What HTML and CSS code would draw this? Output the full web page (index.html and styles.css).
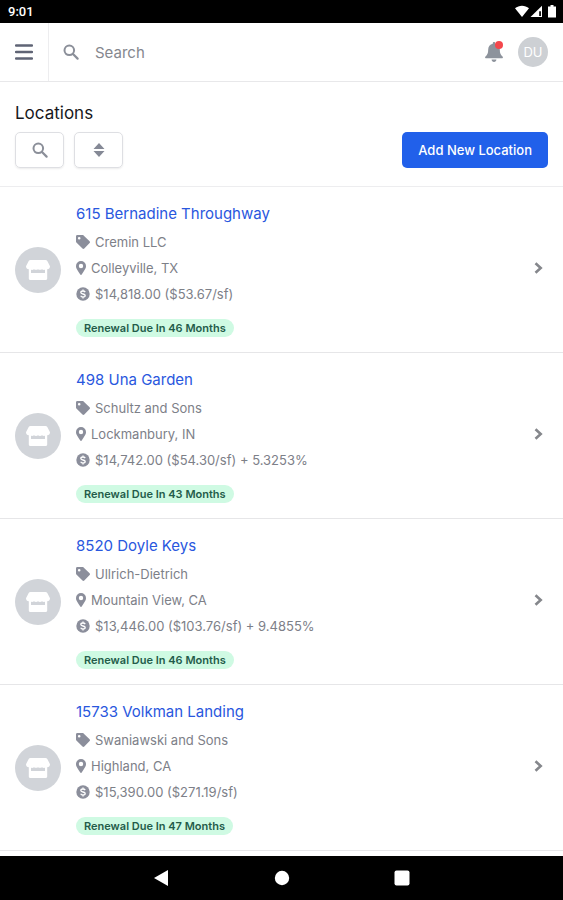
FILE: index.html
```html
<!DOCTYPE html>
<html lang="en">
<head>
  <meta charset="UTF-8">
  <meta name="viewport" content="width=device-width, initial-scale=1.0">
  <title>Locations</title>
  <link rel="stylesheet" href="styles.css">
</head>
<body>

  <!-- shared icons -->
  <svg class="sprite" aria-hidden="true">
    <symbol id="i-search" viewBox="0 0 16 16"><circle cx="6.3" cy="6.3" r="4.8" fill="none" stroke="currentColor" stroke-width="2"/><path d="M10 10l4.6 4.6" stroke="currentColor" stroke-width="2.2" stroke-linecap="round"/></symbol>
    <symbol id="i-store" viewBox="0 0 24 20"><path fill="currentColor" d="M4.500 0h15c.8 0 1.400.4 1.800 1L24 6.200C24 8 22.800 9.200 21.200 9.200V18.500c0 .8-.7 1.500-1.500 1.500H4.300c-.8 0-1.500-.7-1.500-1.500V9.200C1.200 9.200 0 8 0 6.200L2.700 1C3.100.4 3.700 0 4.500 0zM5 9.800v3.200h14V9.800c-1 .3-2.200.1-3-.6-1.100.9-2.900.9-4 0-1.100.9-2.900.9-4 0-.8.700-2 .9-3 .6z"/></symbol>
    <symbol id="i-tag" viewBox="0 0 14 14"><path fill="currentColor" fill-rule="evenodd" d="M1.300 0H6.600c.4 0 .7.1 1 .4l6 5.900c.5.500.5 1.300 0 1.800l-5.300 5.500c-.5.500-1.300.5-1.800 0L.4 7.600C.1 7.300 0 7 0 6.600V1.300C0 .6.600 0 1.300 0zM3.200 1.900a1.300 1.300 0 1 0 0 2.600 1.300 1.300 0 0 0 0-2.600z"/></symbol>
    <symbol id="i-pin" viewBox="0 0 10 14"><path fill="currentColor" fill-rule="evenodd" d="M5 0a5 5 0 0 1 5 5c0 2.200-.8 3-4.300 8.600a.9.900 0 0 1-1.400 0C.8 8 0 7.200 0 5a5 5 0 0 1 5-5zM5 2.800a2.200 2.200 0 1 0 0 4.400 2.200 2.200 0 0 0 0-4.400z"/></symbol>
    <symbol id="i-money" viewBox="0 0 14 14"><circle cx="7" cy="7" r="6.700" fill="currentColor"/><path d="M9.200 5.100C8.800 4.400 8 4 7 4c-1.300 0-2.200.6-2.200 1.500C4.800 7.500 9.200 6.500 9.200 8.500 9.200 9.400 8.300 10 7 10c-1.100 0-1.900-.4-2.300-1.200M7 2.600V4M7 10v1.400" fill="none" stroke="#fff" stroke-width="1.300"/></symbol>
    <symbol id="i-chevron" viewBox="0 0 9 12"><path d="M1.500 1.300L6.700 6l-5.200 4.700" fill="none" stroke="currentColor" stroke-width="2.600"/></symbol>
  </svg>

  <div class="status-bar">
    <span>9:01</span>
    <svg class="status-icons" viewBox="0 0 42 13" fill="#fff" aria-hidden="true">
      <path d="M0 3.300C4-.2 10-.2 14 3.300L7 12z"/>
      <path d="M27 .8V12H15.500z"/>
      <path d="M24.200 6.300h1.700V11h-1.700z" fill="#000"/>
      <path d="M35.500 0h3v1.500H41V12.500h-8V1.500h2.500z"/>
    </svg>
  </div>

  <header class="topbar">
    <button class="menu-btn" type="button" aria-label="Menu">
      <svg viewBox="0 0 18 16" aria-hidden="true"><path d="M1 1.500h16M1 8h16M1 14.500h16" stroke="currentColor" stroke-width="2.400" stroke-linecap="round"/></svg>
    </button>
    <label class="search">
      <svg class="icon-search" aria-hidden="true"><use href="#i-search"/></svg>
      <input type="search" placeholder="Search" aria-label="Search">
    </label>
    <button class="bell-btn" type="button" aria-label="Notifications">
      <svg viewBox="0 0 18 20" aria-hidden="true"><path fill="currentColor" d="M9 0c.7 0 1.200.5 1.200 1.200v.6c2.900.6 4.600 2.900 4.600 5.700 0 3.800.9 5.300 2.700 6.900.9.800.4 1.900-.6 1.900H1.100c-1 0-1.500-1.100-.6-1.900 1.800-1.600 2.700-3.100 2.700-6.900 0-2.800 1.700-5.100 4.600-5.700v-.6C7.800.5 8.300 0 9 0zM6.600 17.500h4.800C11.400 19 10.400 20 9 20s-2.400-1-2.400-2.500z"/></svg>
      <span class="dot"></span>
    </button>
    <a class="avatar" href="#">DU</a>
  </header>

  <section class="toolbar">
    <h1>Locations</h1>
    <div class="actions">
      <button class="tool-btn" type="button" aria-label="Search locations">
        <svg class="icon-search" aria-hidden="true"><use href="#i-search"/></svg>
      </button>
      <button class="tool-btn" type="button" aria-label="Sort">
        <svg class="icon-sort" viewBox="0 0 12 14" fill="currentColor" aria-hidden="true"><path d="M6 0l5.500 6H.5zM6 14L.5 8h11z"/></svg>
      </button>
      <button class="primary-btn" type="button">Add New Location</button>
    </div>
  </section>

  <main class="list">
    <article class="item">
      <span class="thumb"><svg aria-hidden="true"><use href="#i-store"/></svg></span>
      <div class="info">
        <h2><a href="#">615 Bernadine Throughway</a></h2>
        <p><svg class="tag" aria-hidden="true"><use href="#i-tag"/></svg>Cremin LLC</p>
        <p><svg class="pin" aria-hidden="true"><use href="#i-pin"/></svg>Colleyville, TX</p>
        <p><svg class="money" aria-hidden="true"><use href="#i-money"/></svg>$14,818.00 ($53.67/sf)</p>
        <span class="badge">Renewal Due In 46 Months</span>
      </div>
      <svg class="chevron" aria-hidden="true"><use href="#i-chevron"/></svg>
    </article>

    <article class="item">
      <span class="thumb"><svg aria-hidden="true"><use href="#i-store"/></svg></span>
      <div class="info">
        <h2><a href="#">498 Una Garden</a></h2>
        <p><svg class="tag" aria-hidden="true"><use href="#i-tag"/></svg>Schultz and Sons</p>
        <p><svg class="pin" aria-hidden="true"><use href="#i-pin"/></svg>Lockmanbury, IN</p>
        <p><svg class="money" aria-hidden="true"><use href="#i-money"/></svg>$14,742.00 ($54.30/sf) + 5.3253%</p>
        <span class="badge">Renewal Due In 43 Months</span>
      </div>
      <svg class="chevron" aria-hidden="true"><use href="#i-chevron"/></svg>
    </article>

    <article class="item">
      <span class="thumb"><svg aria-hidden="true"><use href="#i-store"/></svg></span>
      <div class="info">
        <h2><a href="#">8520 Doyle Keys</a></h2>
        <p><svg class="tag" aria-hidden="true"><use href="#i-tag"/></svg>Ullrich-Dietrich</p>
        <p><svg class="pin" aria-hidden="true"><use href="#i-pin"/></svg>Mountain View, CA</p>
        <p><svg class="money" aria-hidden="true"><use href="#i-money"/></svg>$13,446.00 ($103.76/sf) + 9.4855%</p>
        <span class="badge">Renewal Due In 46 Months</span>
      </div>
      <svg class="chevron" aria-hidden="true"><use href="#i-chevron"/></svg>
    </article>

    <article class="item">
      <span class="thumb"><svg aria-hidden="true"><use href="#i-store"/></svg></span>
      <div class="info">
        <h2><a href="#">15733 Volkman Landing</a></h2>
        <p><svg class="tag" aria-hidden="true"><use href="#i-tag"/></svg>Swaniawski and Sons</p>
        <p><svg class="pin" aria-hidden="true"><use href="#i-pin"/></svg>Highland, CA</p>
        <p><svg class="money" aria-hidden="true"><use href="#i-money"/></svg>$15,390.00 ($271.19/sf)</p>
        <span class="badge">Renewal Due In 47 Months</span>
      </div>
      <svg class="chevron" aria-hidden="true"><use href="#i-chevron"/></svg>
    </article>
  </main>

  <nav class="nav-bar">
    <button type="button" aria-label="Back"><svg viewBox="0 0 16 16" aria-hidden="true"><path d="M14 0v16L0 8z"/></svg></button>
    <button type="button" aria-label="Home"><svg viewBox="0 0 16 16" aria-hidden="true"><circle cx="8" cy="8" r="7.200"/></svg></button>
    <button type="button" aria-label="Recent apps"><svg viewBox="0 0 16 16" aria-hidden="true"><rect x=".5" y=".5" width="15" height="15" rx="2"/></svg></button>
  </nav>

</body>
</html>
```
FILE: styles.css
```css
* {
  box-sizing: border-box;
}

body {
  margin: 0;
  min-height: 100vh;
  display: flex;
  flex-direction: column;
  font-family: Inter, "Liberation Sans", sans-serif;
  font-size: 13px;
  background-color: #fff;
  color: #7d8088;
}

button {
  margin: 0;
  padding: 0;
  border: none;
  background: none;
  font: inherit;
  color: inherit;
  cursor: pointer;
}

a {
  color: inherit;
  text-decoration: none;
}

svg {
  display: block;
  flex-shrink: 0;
}

.sprite {
  position: absolute;
  width: 0;
  height: 0;
}

.status-bar {
  display: flex;
  align-items: center;
  justify-content: space-between;
  height: 23px;
  padding: 0 6px 0 8px;
  background-color: #000;
  color: #fff;
  font-family: Roboto, sans-serif;
  font-size: 13px;
  font-weight: 500;
}

.status-icons {
  width: 42px;
  height: 13px;
}

.topbar {
  display: flex;
  align-items: center;
  height: 59px;
  padding-right: 15px;
  border-bottom: 1px solid #e8e8ea;
}

.menu-btn {
  display: flex;
  align-items: center;
  justify-content: center;
  align-self: stretch;
  width: 49px;
  border-right: 1px solid #ededef;
  color: #5f6475;
}

.menu-btn svg {
  width: 18px;
  height: 16px;
}

.search {
  display: flex;
  align-items: center;
  flex: 1;
  gap: 16px;
  min-width: 0;
  padding-left: 14px;
}

.icon-search {
  width: 16px;
  height: 16px;
  color: #8b8f99;
}

.search input {
  flex: 1;
  min-width: 0;
  padding: 0;
  border: none;
  outline: none;
  background: none;
  font: inherit;
  font-size: 15px;
}

.search input::placeholder {
  color: #85878e;
}

.bell-btn {
  position: relative;
  margin-right: 15px;
  color: #8d939c;
}

.bell-btn svg {
  width: 18px;
  height: 20px;
}

.dot {
  position: absolute;
  top: -1px;
  right: 0;
  width: 8px;
  height: 8px;
  border-radius: 50%;
  background-color: #f4474c;
}

.avatar {
  display: flex;
  align-items: center;
  justify-content: center;
  width: 30px;
  height: 30px;
  border-radius: 50%;
  background-color: #cdd0d4;
  color: #fff;
}

.toolbar {
  padding: 20px 15px 18px;
  border-bottom: 1px solid #ededef;
}

.toolbar h1 {
  margin: 0 0 8px;
  font-size: 17px;
  line-height: 22px;
  font-weight: 400;
  color: #17181c;
}

.actions {
  display: flex;
  gap: 10px;
}

.tool-btn {
  display: flex;
  align-items: center;
  justify-content: center;
  width: 49px;
  height: 36px;
  border: 1px solid #dedfe3;
  border-radius: 5px;
  box-shadow: 0 1px 2px rgba(0, 0, 0, 0.08);
}

.icon-sort {
  width: 12px;
  height: 14px;
  color: #858996;
}

.primary-btn {
  margin-left: auto;
  height: 36px;
  padding: 0 16px;
  border-radius: 5px;
  background-color: #2160ea;
  color: #fff;
  font-weight: 500;
}

.list {
  flex: 1;
}

.item {
  display: flex;
  align-items: center;
  gap: 15px;
  padding: 16px 20px 15px 15px;
  border-bottom: 1px solid #e6e6e8;
}

.thumb {
  display: flex;
  align-items: center;
  justify-content: center;
  flex-shrink: 0;
  width: 46px;
  height: 46px;
  border-radius: 50%;
  background-color: #d1d4d9;
  color: #fff;
}

.thumb svg {
  width: 24px;
  height: 20px;
}

.info {
  flex: 1;
  min-width: 0;
}

.info h2 {
  margin: 0 0 4px;
  font-size: 15px;
  line-height: 22px;
  font-weight: 400;
  color: #2957de;
}

.info p {
  display: flex;
  align-items: center;
  gap: 5px;
  margin: 0;
  line-height: 26px;
}

.info p svg {
  height: 14px;
  color: #8b8e9b;
}

.tag,
.money {
  width: 14px;
}

.pin {
  width: 10px;
}

.badge {
  display: block;
  width: fit-content;
  margin-top: 12px;
  padding: 0 8px;
  border-radius: 9px;
  background-color: #cffae3;
  color: #245c4a;
  font-size: 11px;
  line-height: 18px;
  font-weight: 600;
}

.chevron {
  width: 9px;
  height: 12px;
  margin-bottom: 4px;
  color: #85878c;
}

.nav-bar {
  display: flex;
  align-items: center;
  justify-content: center;
  gap: 104px;
  height: 44px;
  background-color: #000;
}

.nav-bar svg {
  width: 16px;
  height: 16px;
  fill: #fff;
}
```
